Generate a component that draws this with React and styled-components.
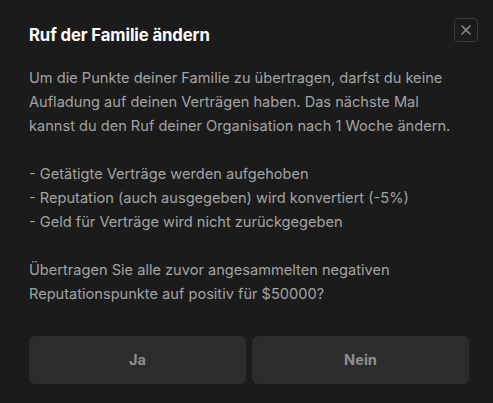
import styled, { createGlobalStyle } from 'styled-components';

const Global = createGlobalStyle`
  html, body { margin: 0; padding: 0; background: #1b1b1b; }
  body { font-family: Inter, "Noto Sans", sans-serif; }
`

const Modal = styled.div`
  width: 493px;
  height: 403px;
  box-sizing: border-box;
  padding: 18px 24px 0 29px;
  background: #1b1b1b;
  display: flex;
  flex-direction: column;
`
const Header = styled.div`
  display: flex;
  justify-content: space-between;
  align-items: flex-start;
  height: 48px;
`
const Title = styled.h2`
  margin: 7px 0 0;
  font-size: 16.7px;
  font-weight: 700;
  color: #ffffff;
  letter-spacing: -0.1px;
`
const CloseButton = styled.button`
  width: 24px;
  height: 24px;
  margin-right: -9px;
  padding: 0;
  border: 1px solid #3c3c3c;
  border-radius: 4px;
  background: transparent;
  color: #8c8c8c;
  display: flex;
  align-items: center;
  justify-content: center;
`
const Body = styled.div`
  color: #a3a3a3;
  font-size: 14.6px;
  line-height: 24px;
  white-space: nowrap;
`
const Para = styled.p`
  margin: 0 0 24px;
  &:last-child { margin-bottom: 0; }
`
const Actions = styled.div`
  display: grid;
  grid-template-columns: 1fr 1fr;
  gap: 6px;
  margin-top: 30px;
`
const ActionButton = styled.button`
  height: 48px;
  border: none;
  border-radius: 6px;
  background: #2c2c2c;
  color: #8e8e8e;
  font-family: Inter, sans-serif;
  font-size: 14.6px;
  font-weight: 700;
`

const App = () => {
  return (
    <Modal>
      <Global />
      <Header>
        <Title>Ruf der Familie ändern</Title>
        <CloseButton>
          <svg width="12" height="12" viewBox="0 0 12 12">
            <path d="M2 2L10 10M10 2L2 10" stroke="currentColor" strokeWidth="1.6" strokeLinecap="round" />
          </svg>
        </CloseButton>
      </Header>
      <Body>
        <Para>
          Um die Punkte deiner Familie zu übertragen, darfst du keine<br />
          Aufladung auf deinen Verträgen haben. Das nächste Mal<br />
          kannst du den Ruf deiner Organisation nach 1 Woche ändern.
        </Para>
        <Para>
          - Getätigte Verträge werden aufgehoben<br />
          - Reputation (auch ausgegeben) wird konvertiert (-5%)<br />
          - Geld für Verträge wird nicht zurückgegeben
        </Para>
        <Para>
          Übertragen Sie alle zuvor angesammelten negativen<br />
          Reputationspunkte auf positiv für $50000?
        </Para>
      </Body>
      <Actions>
        <ActionButton>Ja</ActionButton>
        <ActionButton>Nein</ActionButton>
      </Actions>
    </Modal>
  )
}
export default App
